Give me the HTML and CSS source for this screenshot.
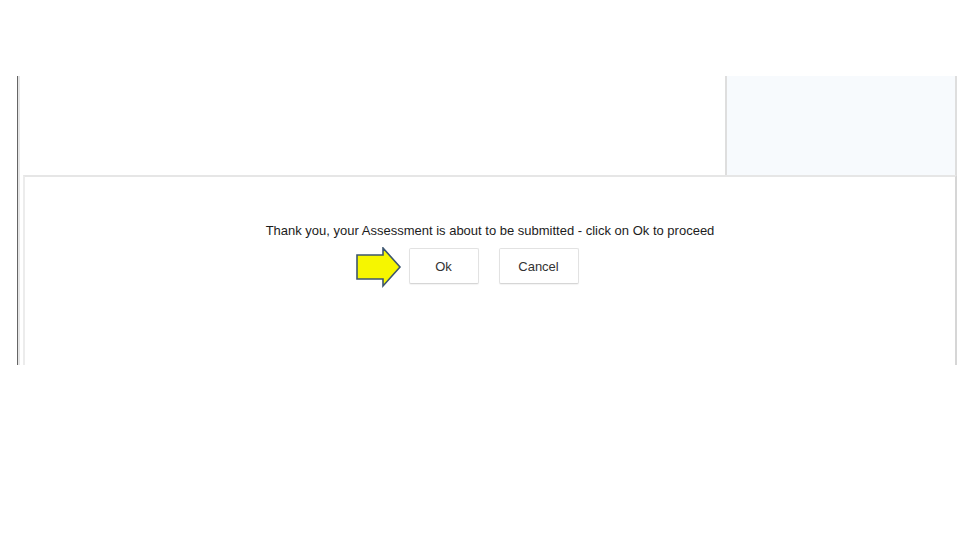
FILE: index.html
```html
<!DOCTYPE html>
<html lang="en">
<head>
    <meta charset="UTF-8">
    <meta name="viewport" content="width=device-width, initial-scale=1.0">
    <title>Submit Assessment</title>
    <link rel="stylesheet" href="styles.css">
</head>
<body>

<div class="frame">
    <div class="top">
        <div class="side-panel"></div>
    </div>

    <section class="dialog">
        <p class="message">Thank you, your Assessment is about to be submitted - click on Ok to proceed</p>
        <div class="actions">
            <button class="btn btn-ok">
                Ok
                <!-- flecha amarilla -->
                <svg class="pointer" width="48" height="42" viewBox="0 0 48 42">
                    <path d="M2 8 H28 V1 L45 20 L28 39 V32 H2 Z" fill="#f6f600" stroke="#3d5670" stroke-width="1.6" stroke-linejoin="miter"/>
                </svg>
            </button>
            <button class="btn btn-cancel">Cancel</button>
        </div>
    </section>
</div>

</body>
</html>
```

FILE: styles.css
```css
body {
    font-family: "Liberation Sans", Arial, sans-serif;
    background-color: #fff;
    margin: 0;
    padding: 0;
}
.frame {
    margin: 76px 0 0 17px;
    width: 939px;
    height: 289px;
    border-left: 1px solid #666;
    box-shadow: inset 2px 0 0 #e6e6e6;
    display: flex;
    flex-direction: column;
}
.top {
    height: 99px;
    display: flex;
    justify-content: flex-end;
}
.side-panel {
    width: 228px;
    background-color: #f7fafd;
    border-left: 2px solid #dedede;
    border-right: 2px solid #dedede;
}
.dialog {
    flex: 1;
    margin-left: 5px;
    border-top: 2px solid #e6e6e6;
    border-left: 2px solid #ececec;
    border-right: 2px solid #d6d6d6;
    padding-top: 46px;
    text-align: center;
}
.message {
    margin: 0;
    font-size: 13px;
    line-height: 16px;
    color: #1c1c1c;
}
.actions {
    margin-top: 9px;
    margin-left: 7px;
    display: flex;
    justify-content: center;
    gap: 20px;
}
.btn {
    position: relative;
    height: 36px;
    font-family: inherit;
    font-size: 13px;
    color: #333;
    background-color: #fff;
    border: 1px solid #e2e2e2;
    border-bottom-color: #d6d6d6;
    border-radius: 2px;
    box-shadow: 0 1px 1px rgba(0, 0, 0, 0.05);
    padding: 0;
}
.btn-ok {
    width: 70px;
}
.btn-cancel {
    width: 80px;
}
.pointer {
    position: absolute;
    left: -55px;
    top: -2px;
}
```
